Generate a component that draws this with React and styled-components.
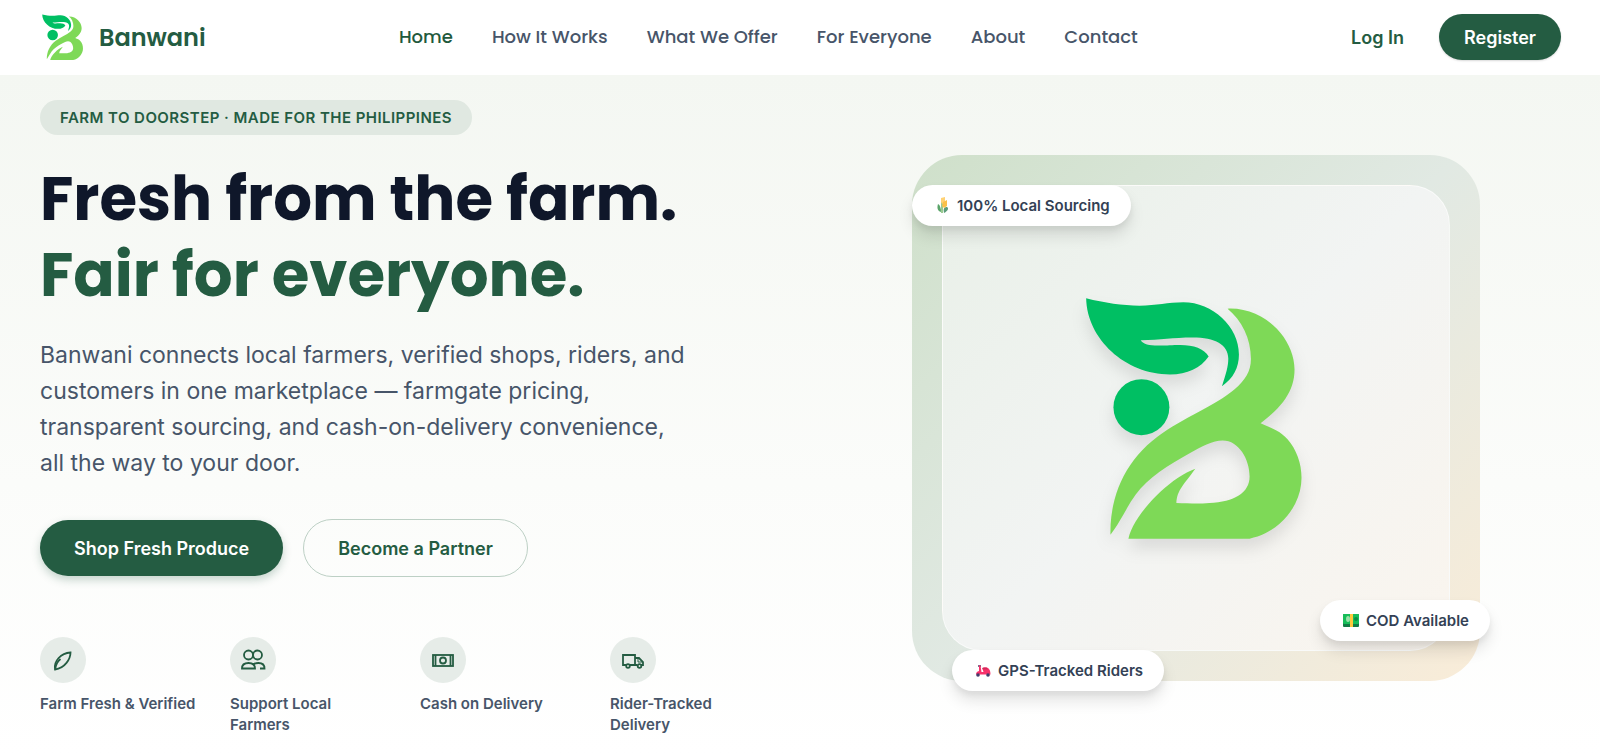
import React from 'react'
import styled, { createGlobalStyle } from 'styled-components'

const GlobalStyle = createGlobalStyle`
  *, *::before, *::after {
    box-sizing: border-box;
  }
  body {
    margin: 0;
    background: #ffffff;
    color: #0f172a;
    font-family: Inter, 'Liberation Sans', sans-serif;
  }
  h1, p, ul {
    margin: 0;
    padding: 0;
  }
  a {
    text-decoration: none;
  }
`

const Header = styled.header`
  display: flex;
  align-items: center;
  justify-content: space-between;
  height: 75px;
  padding: 0 39px 1px 40px;
  background: #ffffff;
`

const Brand = styled.a`
  display: flex;
  align-items: center;
  gap: 15px;
  padding-left: 2px;
  color: #245c42;
  font-family: Poppins, Inter, sans-serif;
  font-size: 24px;
  font-weight: 600;
`

const Nav = styled.nav`
  display: flex;
  gap: 39px;
`

const NavLink = styled.a`
  color: ${(props) => (props.$active ? '#1f5a3d' : '#475569')};
  font-family: Poppins, Inter, sans-serif;
  font-size: 18px;
  font-weight: 500;
  line-height: 28px;
`

const Actions = styled.div`
  display: flex;
  align-items: center;
  gap: 15px;
`

const LoginLink = styled.a`
  padding: 0 20px;
  color: #245c42;
  font-size: 18px;
  font-weight: 600;
`

const Button = styled.button`
  height: ${(props) => (props.$small ? '46px' : '56px')};
  padding: 0 ${(props) => (props.$small ? '25px' : '34px')};
  border: 0;
  border-radius: 28px;
  background: #245c42;
  color: #ffffff;
  font-family: inherit;
  font-size: 18px;
  font-weight: 600;
  cursor: pointer;
  box-shadow: ${(props) =>
    props.$small
      ? '0 1px 2px rgba(0, 0, 0, 0.15)'
      : '0 4px 8px rgba(36, 92, 66, 0.25)'};
`

const OutlineButton = styled(Button)`
  height: 58px;
  border: 1px solid #bdd0c5;
  border-radius: 29px;
  background: transparent;
  color: #245c42;
  box-shadow: none;
`

const Hero = styled.main`
  display: grid;
  grid-template-columns: 1fr 1fr;
  align-items: center;
  gap: 64px;
  padding: 25px 40px 20px;
  background: linear-gradient(180deg, #f4f7f2 0%, #fbfcfa 60%, #ffffff 100%);
`

const Tagline = styled.p`
  display: inline-block;
  padding: 0 20px;
  border-radius: 18px;
  background: #e0e8e1;
  color: #245c42;
  font-size: 15px;
  font-weight: 600;
  line-height: 35px;
  letter-spacing: 0.03em;
  text-transform: uppercase;
`

const Title = styled.h1`
  margin-top: 26px;
  font-family: Poppins, Inter, sans-serif;
  font-size: 61px;
  font-weight: 700;
  line-height: 76px;
`

const TitleAccent = styled.span`
  display: block;
  color: #245c42;
`

const Lead = styled.p`
  max-width: 650px;
  margin-top: 24px;
  color: #475569;
  font-size: 23px;
  line-height: 36px;
`

const ButtonRow = styled.div`
  display: flex;
  align-items: center;
  gap: 20px;
  margin-top: 38px;
`

const Features = styled.ul`
  display: grid;
  grid-template-columns: repeat(4, 1fr);
  gap: 32px;
  margin-top: 60px;
  list-style: none;
`

const Feature = styled.li`
  color: #475569;
  font-size: 15px;
  font-weight: 600;
  line-height: 21px;
`

const FeatureIcon = styled.svg`
  display: block;
  width: 46px;
  height: 46px;
  margin-bottom: 10px;
  border-radius: 50%;
  background: #e6ece8;
  fill: none;
  stroke: #245c42;
  stroke-width: 1.8;
`

const Visual = styled.div`
  position: relative;
  width: 100%;
  max-width: 568px;
  height: 526px;
  margin: 0 auto;
  padding: 30px;
  border-radius: 50px;
  background: linear-gradient(135deg, #cfe0ca 0%, #e1e9e3 50%, #f9ecd8 100%);
`

const Panel = styled.div`
  display: flex;
  align-items: center;
  justify-content: center;
  height: 100%;
  border: 1px solid rgba(255, 255, 255, 0.6);
  border-radius: 40px;
  background: linear-gradient(135deg, #e9f0e8 0%, #f2f4f3 50%, #faf5ee 100%);
`

const LogoSvg = styled.svg`
  display: block;
  overflow: visible;
  filter: ${(props) =>
    props.$shadow ? 'drop-shadow(0 10px 8px rgba(0, 0, 0, 0.1))' : 'none'};
`

const Chip = styled.div`
  position: absolute;
  display: flex;
  align-items: center;
  gap: 7px;
  height: 41px;
  padding: 0 21px 0 23px;
  border-radius: 21px;
  background: #ffffff;
  color: #334155;
  font-size: 15px;
  font-weight: 600;
  white-space: nowrap;
  box-shadow: 0 10px 15px rgba(0, 0, 0, 0.1), 0 4px 6px rgba(0, 0, 0, 0.06);
`

const SourcingChip = styled(Chip)`
  top: 30px;
  left: 0;
`

const CodChip = styled(Chip)`
  right: -10px;
  bottom: 40px;
`

const RidersChip = styled(Chip)`
  bottom: -10px;
  left: 40px;
`

function Logo({ width, height, shadow }) {
  return (
    <LogoSvg
      width={width}
      height={height}
      viewBox='50 50 660 730'
      $shadow={shadow}
      aria-hidden='true'
    >
      <path
        fill='#00bf63'
        d='M50 57C105 71 160 79 210 79C262 79 295 69 342 69C430 69 509 142 509 226C509 265 492 298 458 321C470 284 477 262 477 238C477 197 437 175 370 175C310 175 275 183 214 183C222 195 239 199 266 199C296 199 307 197 333 197C373 197 405 208 418 232C394 267 354 286 302 286C168 286 52 179 50 57Z'
      />
      <circle cx='216' cy='384' r='84' fill='#00bf63' />
      <path
        fill='#7ed957'
        d='M475 88C585 83 676 178 676 271C676 337 637 385 574 432C612 448 636 458 655 480C682 511 697 552 697 596C697 678 634 760 541 779L177 779C192 709 297 598 378 569C344 617 323 632 321 672C360 673 386 675 420 672C495 668 541 641 541 592C541 541 509 484 460 484C430 484 398 502 365 520C297 557 237 596 199 646C171 684 152 731 123 767C121 650 169 544 264 473C343 414 437 380 496 330C527 303 545 277 545 239C545 177 517 123 475 88Z'
      />
    </LogoSvg>
  )
}

function CornIcon() {
  return (
    <svg width='15' height='16' viewBox='0 0 15 16' aria-hidden='true'>
      <path d='M3 7C5 8 6 11 6 15C2 14 2 10 3 7Z' fill='#5aa469' />
      <path d='M12 10C14 11 13 14 9 16C8 12 9 10 12 10Z' fill='#5b9c78' />
      <path d='M7 5V16' stroke='#78b86b' strokeWidth='1.5' />
      <path d='M6 1L10 0V5L7 7L6 5Z' fill='#ffd275' />
      <path d='M8 5L12 3V9L9 11L7 9Z' fill='#fbc04a' />
    </svg>
  )
}

function CashEmoji() {
  return (
    <svg width='16' height='13' viewBox='0 0 16 13' aria-hidden='true'>
      <rect width='16' height='13' rx='1' fill='#137a45' />
      <rect width='16' height='10' rx='1' fill='#17bd58' />
      <ellipse cx='5' cy='5' rx='2' ry='3' fill='#9be0a8' />
      <circle cx='13' cy='5' r='2' fill='#0c8e45' />
      <rect x='7' width='3' height='13' fill='#ffc83d' />
    </svg>
  )
}

function ScooterIcon() {
  return (
    <svg width='16' height='13' viewBox='0 0 16 13' aria-hidden='true'>
      <path d='M3 2H6' stroke='#53406b' strokeWidth='1.5' />
      <path
        d='M4 1.5H5.5L6.5 8H8.5L7.5 5L9 3.5H12C14.5 4.5 15.5 7 15.5 10.5H1C1 8.5 2 7.5 4 7Z'
        fill='#f8316b'
      />
      <path d='M7 4.5L8 3.5H11.5L13 5.5H8Z' fill='#d32a5a' />
      <circle cx='3' cy='11' r='1.8' fill='#433b6b' />
      <circle cx='13' cy='11' r='1.8' fill='#433b6b' />
    </svg>
  )
}

const navItems = [
  'Home',
  'How It Works',
  'What We Offer',
  'For Everyone',
  'About',
  'Contact',
]

const features = [
  {
    label: 'Farm Fresh & Verified',
    icon: (
      <>
        <path d='M15 32.5C13.5 24 21 16 30.5 15.5C30.5 22 25 31 15 32.5Z' />
        <path d='M15.5 31C16 27 18 24 20.5 22' />
      </>
    ),
  },
  {
    label: 'Support Local Farmers',
    icon: (
      <>
        <circle cx='18.5' cy='18' r='4.5' />
        <circle cx='27.5' cy='18' r='4.5' />
        <path d='M12 31.5C12 28 14.5 26 18.5 26C22.5 26 25 28 25 31.5Z' />
        <path d='M23 27.5C25 26 26.5 26 28.5 26C32 26 34.5 28 34.5 31.5H30' />
      </>
    ),
  },
  {
    label: 'Cash on Delivery',
    icon: (
      <>
        <rect x='13' y='18' width='20' height='11' />
        <circle cx='23' cy='23.5' r='3' />
        <path d='M15.5 18V29M30.5 18V29' />
      </>
    ),
  },
  {
    label: 'Rider-Tracked Delivery',
    icon: (
      <>
        <path d='M16 28H13V18H25V28H20M25 21H29L33 25V28H31M25 28H27' />
        <path d='M28 21V25H33' strokeWidth='1' />
        <circle cx='18' cy='29' r='1.8' />
        <circle cx='29.5' cy='29' r='1.8' />
      </>
    ),
  },
]

function App() {
  return (
    <>
      <GlobalStyle />
      <Header>
        <Brand href='#home'>
          <Logo width={42} height={46} />
          Banwani
        </Brand>
        <Nav>
          {navItems.map((item) => (
            <NavLink key={item} href='#' $active={item === 'Home'}>
              {item}
            </NavLink>
          ))}
        </Nav>
        <Actions>
          <LoginLink href='#login'>Log In</LoginLink>
          <Button $small>Register</Button>
        </Actions>
      </Header>
      <Hero>
        <div>
          <Tagline>Farm to Doorstep · Made for the Philippines</Tagline>
          <Title>
            Fresh from the farm.
            <TitleAccent>Fair for everyone.</TitleAccent>
          </Title>
          <Lead>
            Banwani connects local farmers, verified shops, riders, and
            customers in one marketplace — farmgate pricing, transparent
            sourcing, and cash-on-delivery convenience, all the way to your
            door.
          </Lead>
          <ButtonRow>
            <Button>Shop Fresh Produce</Button>
            <OutlineButton>Become a Partner</OutlineButton>
          </ButtonRow>
          <Features>
            {features.map((feature) => (
              <Feature key={feature.label}>
                <FeatureIcon viewBox='0 0 46 46' aria-hidden='true'>
                  {feature.icon}
                </FeatureIcon>
                {feature.label}
              </Feature>
            ))}
          </Features>
        </div>
        <Visual>
          <Panel>
            <Logo width={220} height={243} shadow />
          </Panel>
          <SourcingChip>
            <CornIcon />
            100% Local Sourcing
          </SourcingChip>
          <CodChip>
            <CashEmoji />
            COD Available
          </CodChip>
          <RidersChip>
            <ScooterIcon />
            GPS-Tracked Riders
          </RidersChip>
        </Visual>
      </Hero>
    </>
  )
}

export default App
